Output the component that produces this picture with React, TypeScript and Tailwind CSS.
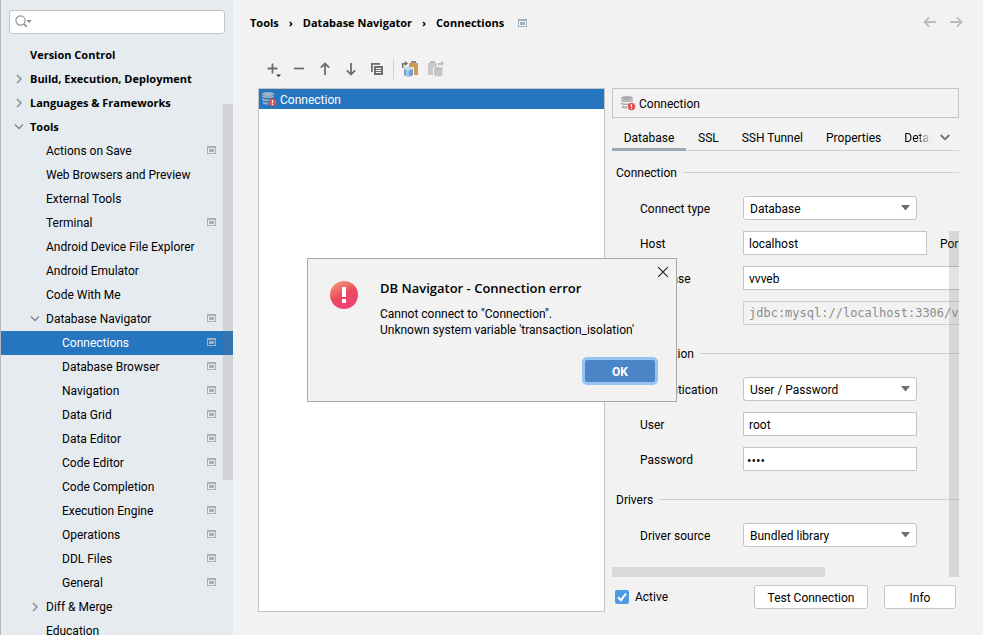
import { useState, type ReactNode } from "react";
import clsx from "clsx";

type TreeRow = {
  label: string;
  level: 0 | 1 | 2;
  arrow?: "open" | "closed";
  project?: boolean;
  selected?: boolean;
};

const TREE: TreeRow[] = [
  { label: "Version Control", level: 0 },
  { label: "Build, Execution, Deployment", level: 0, arrow: "closed" },
  { label: "Languages & Frameworks", level: 0, arrow: "closed" },
  { label: "Tools", level: 0, arrow: "open" },
  { label: "Actions on Save", level: 1, project: true },
  { label: "Web Browsers and Preview", level: 1 },
  { label: "External Tools", level: 1 },
  { label: "Terminal", level: 1, project: true },
  { label: "Android Device File Explorer", level: 1 },
  { label: "Android Emulator", level: 1 },
  { label: "Code With Me", level: 1 },
  { label: "Database Navigator", level: 1, arrow: "open", project: true },
  { label: "Connections", level: 2, project: true, selected: true },
  { label: "Database Browser", level: 2, project: true },
  { label: "Navigation", level: 2, project: true },
  { label: "Data Grid", level: 2, project: true },
  { label: "Data Editor", level: 2, project: true },
  { label: "Code Editor", level: 2, project: true },
  { label: "Code Completion", level: 2, project: true },
  { label: "Execution Engine", level: 2, project: true },
  { label: "Operations", level: 2, project: true },
  { label: "DDL Files", level: 2, project: true },
  { label: "General", level: 2, project: true },
  { label: "Diff & Merge", level: 1, arrow: "closed" },
  { label: "Education", level: 1 },
];

const BOLD = "font-['Open_Sans','Noto_Sans',sans-serif] text-[11px] font-bold";

function ProjectIcon({ className }: { className?: string }) {
  return (
    <svg viewBox="0 0 9 8" className={clsx("h-2 w-[9px] shrink-0", className)} aria-hidden="true">
      <path d="M0 0h9v8H0zM1 2v5h7V2z" fill="#a6b2bb" fillRule="evenodd" />
      <path d="M2 3h5v3H2z" fill="#a6b2bb" />
    </svg>
  );
}

function Arrow({ open }: { open: boolean }) {
  return (
    <svg viewBox="0 0 10 10" className="size-[10px]" fill="none" stroke="#808589" strokeWidth="1.3" aria-hidden="true">
      <path d={open ? "M1 2.500l4 4 4-4" : "M3 1l4 4-4 4"} />
    </svg>
  );
}

function DbErrorIcon({ light }: { light?: boolean }) {
  const fill = light ? "#9fb0c0" : "#a9adb1";
  return (
    <svg viewBox="0 0 16 16" className="size-4 shrink-0" aria-hidden="true">
      <g fill={fill}>
        <ellipse cx="7" cy="3" rx="6" ry="2" />
        <path d="M1 4.200c1.400 1.400 10.600 1.400 12 0v1.600c-1.200 1.700-10.800 1.700-12 0z" />
        <path d="M1 7.200c1.500 1.300 5 1.500 8 1.200l-1 1.700c-3 .1-6-.2-7-1.200z" />
        <path d="M2 10.500c1 .9 3 1.100 5 1.100v2c-2.600 0-4.600-.3-5-1.100z" />
      </g>
      <circle cx="11.500" cy="11.500" r="3.800" fill="#e05555" />
      <path d="M11 9h1v3.200h-1zM11 13h1v1h-1z" fill="#fff" />
    </svg>
  );
}

function ToolButton({ label, children }: { label: string; children: ReactNode }) {
  return (
    <button type="button" aria-label={label} className="flex h-[26px] w-[26px] items-center justify-center">
      <svg viewBox="0 0 16 16" className="size-4" fill="none" stroke="#6e6e6e" strokeWidth="1.800" aria-hidden="true">
        {children}
      </svg>
    </button>
  );
}

function Toolbar() {
  return (
    <div className="flex h-[26px] items-center pl-[2px]">
      <ToolButton label="Add connection">
        <path d="M7.500 2.500v10M2.500 7.500h10" />
        <path d="M11 13.500h5l-2.500 2.500z" fill="#333" stroke="none" />
      </ToolButton>
      <ToolButton label="Remove connection">
        <path d="M3 7.500h10" />
      </ToolButton>
      <ToolButton label="Move up">
        <path d="M8 14V2.500M3.800 6.700L8 2.500l4.200 4.200" />
      </ToolButton>
      <ToolButton label="Move down">
        <path d="M8 2v11.500M3.800 9.300L8 13.500l4.200-4.200" />
      </ToolButton>
      <ToolButton label="Duplicate connection">
        <path d="M2.900 11V2.900H11" />
        <path d="M5 5h9v9H5zM7 7v1h5V7zM7 9v1h5V9zM7 11v1h5v-1z" fill="#6e6e6e" stroke="none" fillRule="evenodd" />
      </ToolButton>
      <div className="mx-[3px] h-5 w-px bg-[#d0d0d0]" />
      <ToolButton label="Paste connections">
        <g stroke="none">
          <path d="M7 2h9v12h-4V6H7z" fill="#cf9b4e" />
          <path d="M9 0h5v2H9z" fill="#8a8d90" />
          <path d="M0 7V2h3V0l3 2.500L3 5V3.500H1.500V7z" fill="#6e6e6e" />
          <path d="M2 7.500v6c0 2.600 9 2.600 9 0v-6z" fill="#6f9fd0" />
          <path d="M4 8v7c1 .3 2 .4 3 .4V8z" fill="#a5c8ea" />
          <ellipse cx="6.500" cy="7.500" rx="4.500" ry="1.700" fill="#c3daf0" />
        </g>
      </ToolButton>
      <ToolButton label="Copy connections">
        <g stroke="none">
          <path d="M0 2h9v4H5v8H0z" fill="#c9c9c9" />
          <path d="M2 0h5v2H2z" fill="#b9b9b9" />
          <path d="M10 4.500V2h3V0l3 2.500L13 5V3.500h-1.500v1z" fill="#b9b9b9" />
          <path d="M6 8v5.500c0 2.600 8.500 2.600 8.500 0V8z" fill="#c6c6c6" />
          <ellipse cx="10.250" cy="7.500" rx="4.250" ry="1.500" fill="#bdbdbd" />
        </g>
      </ToolButton>
    </div>
  );
}

function Sidebar() {
  return (
    <aside className="relative w-[233px] shrink-0 overflow-hidden border-l border-[#b4b8bb] bg-[#e6ebf0]">
      <div className="px-2 pt-[10px] pb-[9px]">
        <label className="flex h-6 items-center rounded-[3px] border border-[#c4c4c4] bg-white pl-[5px]">
          <svg viewBox="0 0 17 14" className="h-[14px] w-[17px] shrink-0" fill="none" stroke="#8f979d" strokeWidth="1.200" aria-hidden="true">
            <circle cx="5.500" cy="5.500" r="4.600" />
            <path d="M8.800 8.800l3 3" strokeWidth="1.800" />
            <path d="M11.500 5h5L14 8z" fill="#7f868b" stroke="none" />
          </svg>
          <input type="text" aria-label="Search settings" className="min-w-0 flex-1 bg-transparent outline-none" />
        </label>
      </div>
      <ul>
        {TREE.map((row) => (
          <li
            key={row.label}
            className={clsx(
              "flex h-6 items-center pr-[17px]",
              row.level === 0 && "pb-px pl-[13px]",
              row.level === 0 && BOLD,
              row.level === 1 && "pl-[29px]",
              row.level === 2 && "pl-[45px]",
              row.selected && "bg-[#2675bf] text-white",
            )}
          >
            <span className="w-4 shrink-0">{row.arrow && <Arrow open={row.arrow === "open"} />}</span>
            <span className="flex-1 whitespace-nowrap">{row.label}</span>
            {row.project && <ProjectIcon className="mb-[2px]" />}
          </li>
        ))}
      </ul>
      <div className="absolute top-[104px] right-0 h-[376px] w-[10px] bg-[#737373]/20" />
    </aside>
  );
}

function Section({ title, children }: { title: string; children: ReactNode }) {
  return (
    <fieldset className="pb-[18px]">
      <legend className="flex h-5 w-full items-center gap-[6px] pl-1">
        <span className="pt-[2px]">{title}</span>
        <span className="h-px flex-1 bg-[#d0d0d0]" />
      </legend>
      <div className="flex flex-col gap-[11px] pt-[14px] pl-7">{children}</div>
    </fieldset>
  );
}

function Row({ label, id, children }: { label: string; id: string; children: ReactNode }) {
  return (
    <div className="flex h-6 items-center">
      <label htmlFor={id} className="w-[103px] shrink-0 pt-[2px]">
        {label}
      </label>
      {children}
    </div>
  );
}

function Dropdown({ id, value }: { id: string; value: string }) {
  return (
    <div className="relative h-6 w-[174px] shrink-0">
      <select id={id} className="h-6 w-full appearance-none rounded-[3px] border border-[#c4c4c4] bg-white pt-[2px] pl-[6px]">
        <option>{value}</option>
      </select>
      <svg viewBox="0 0 9 6" className="pointer-events-none absolute top-[9px] right-[7px] h-[6px] w-[9px]" aria-hidden="true">
        <path d="M0 0h9L4.500 5.500z" fill="#6e6e6e" />
      </svg>
    </div>
  );
}

const FIELD = "h-6 shrink-0 border border-[#c4c4c4] bg-white px-[5px] pt-[2px] outline-none";

function ConnectionForm() {
  return (
    <div className="relative min-h-0 flex-1 overflow-hidden pt-[11px]">
      <Section title="Connection">
        <Row label="Connect type" id="connect-type">
          <Dropdown id="connect-type" value="Database" />
        </Row>
        <Row label="Host" id="host">
          <input id="host" defaultValue="localhost" className={clsx(FIELD, "w-[184px]")} />
          <label htmlFor="port" className="ml-[13px] pt-[2px] whitespace-nowrap">
            Port
          </label>
          <input id="port" defaultValue="3306" className={clsx(FIELD, "ml-4 w-16")} />
        </Row>
        <Row label="Database" id="database">
          <input id="database" defaultValue="vvveb" className={clsx(FIELD, "w-[300px]")} />
        </Row>
        <Row label="URL" id="url">
          <input
            id="url"
            disabled
            defaultValue="jdbc:mysql://localhost:3306/vvveb"
            className="h-6 w-[300px] shrink-0 border border-[#cfcfcf] px-[5px] font-['DejaVu_Sans_Mono',monospace] text-[#8c8c8c]"
          />
        </Row>
      </Section>
      <Section title="Authentication">
        <Row label="Authentication" id="auth">
          <Dropdown id="auth" value="User / Password" />
        </Row>
        <Row label="User" id="user">
          <input id="user" defaultValue="root" className={clsx(FIELD, "w-[174px]")} />
        </Row>
        <Row label="Password" id="password">
          <input id="password" type="password" defaultValue="root" className="h-6 w-[174px] border border-[#c4c4c4] bg-white px-[3px] pt-[2px] font-['Open_Sans',sans-serif] outline-none" />
        </Row>
      </Section>
      <Section title="Drivers">
        <Row label="Driver source" id="driver">
          <Dropdown id="driver" value="Bundled library" />
        </Row>
      </Section>
      <div className="absolute top-20 right-0 bottom-0 w-[10px] bg-[#737373]/20" />
      <div className="absolute bottom-0 left-0 h-[10px] w-[213px] bg-[#d9d9d9]" />
    </div>
  );
}

function Tabs() {
  return (
    <div className="flex h-[33px] items-stretch border-b border-[#d0d0d0] whitespace-nowrap" role="tablist">
      <button type="button" role="tab" aria-selected="true" className="-mb-px w-[74px] shrink-0 border-b-[3px] border-[#9ca7b8] pt-[9px]">
        Database
      </button>
      <button type="button" role="tab" className="pt-[7px] pl-3">
        SSL
      </button>
      <button type="button" role="tab" className="pt-[7px] pl-[23px]">
        SSH Tunnel
      </button>
      <button type="button" role="tab" className="pt-[7px] pl-[23px]">
        Properties
      </button>
      <button type="button" role="tab" className="ml-[23px] w-[27px] overflow-hidden mask-r-from-50% pt-[7px] text-left">
        Details
      </button>
      <button type="button" aria-label="More tabs" className="ml-auto pt-[7px] pr-[9px]">
        <svg viewBox="0 0 10 7" className="h-[7px] w-[10px]" fill="none" stroke="#6e6e6e" strokeWidth="1.800" aria-hidden="true">
          <path d="M.7 1l4.300 4.300L9.300 1" />
        </svg>
      </button>
    </div>
  );
}

function ErrorDialog({ onClose }: { onClose: () => void }) {
  return (
    <div className="absolute inset-x-0 top-[258px] flex justify-center pl-px">
      <div role="alertdialog" aria-labelledby="dialog-title" className="relative flex h-36 w-[370px] border border-[#a8a8a8] bg-[#f2f2f2] pt-[21px] pr-[18px] pl-[22px]">
        <svg viewBox="0 0 28 28" className="mt-px size-7 shrink-0" aria-hidden="true">
          <defs>
            <linearGradient id="alert" x1="0.200" y1="0" x2="0.700" y2="1">
              <stop offset="0" stopColor="#f59a7c" />
              <stop offset="0.500" stopColor="#ea4a5f" />
              <stop offset="1" stopColor="#ee3f7c" />
            </linearGradient>
          </defs>
          <circle cx="14" cy="14" r="14" fill="url(#alert)" />
          <path d="M12 6h4v10h-4zM12 18h4v4h-4z" fill="#fff" />
        </svg>
        <div className="ml-[22px] flex flex-1 flex-col">
          <h2 id="dialog-title" className="font-['Open_Sans','Noto_Sans',sans-serif] text-[13px] leading-4 font-semibold">
            DB Navigator - Connection error
          </h2>
          <p className="mt-[10px] leading-4 whitespace-nowrap">
            Cannot connect to "Connection".
            <br />
            Unknown system variable 'transaction_isolation'
          </p>
          <button
            type="button"
            onClick={onClose}
            className="mt-[19px] h-7 w-[76px] self-end rounded-[5px] border-[3px] border-[#97c3f3] bg-[#4a86c7] pt-px font-bold text-white"
          >
            OK
          </button>
        </div>
        <button type="button" aria-label="Close" onClick={onClose} className="absolute top-2 right-2">
          <svg viewBox="0 0 10 10" className="size-[10px]" stroke="#222" strokeWidth="1.200" aria-hidden="true">
            <path d="M0 0l10 10M10 0L0 10" />
          </svg>
        </button>
      </div>
    </div>
  );
}

export default function App() {
  const [error, setError] = useState(true);
  return (
    <div className="relative flex h-screen overflow-hidden bg-[#f2f2f2] font-[Roboto,'Open_Sans',sans-serif] text-[12px] leading-4 text-black">
      <Sidebar />
      <main className="flex min-w-0 flex-1 flex-col pr-6 pb-[23px] pl-[25px]">
        <header className="-ml-2 flex h-[46px] items-center">
          <nav aria-label="Breadcrumb" className={clsx("flex items-center whitespace-nowrap", BOLD)}>
            <span>Tools</span>
            <span className="w-6 text-center">›</span>
            <span>Database Navigator</span>
            <span className="w-6 text-center">›</span>
            <span>Connections</span>
            <ProjectIcon className="ml-[14px]" />
          </nav>
          <div className="-mr-1 ml-auto flex gap-[14px]">
            {["Back", "Forward"].map((name) => (
              <button key={name} type="button" aria-label={name} className="pb-[2px]">
                <svg viewBox="0 0 13 12" className="h-3 w-[13px]" fill="none" stroke="#bcbcbc" strokeWidth="1.800" aria-hidden="true">
                  <path d={name === "Back" ? "M13 6H1.500M6 1.500L1.500 6 6 10.500" : "M0 6h11.500M7 1.500L11.500 6 7 10.500"} />
                </svg>
              </button>
            ))}
          </div>
        </header>
        <div className="pt-[10px] pb-[6px]">
          <Toolbar />
        </div>
        <div className="grid min-h-0 flex-1 grid-cols-2 gap-[7px]">
          <ul className="border border-[#c4c4c4] bg-white">
            <li className="flex h-5 items-center gap-[3px] bg-[#2675bf] pl-[2px] text-white">
              <DbErrorIcon light />
              <span className="pt-[2px]">Connection</span>
            </li>
          </ul>
          <section className="flex min-h-0 min-w-0 flex-col">
            <div className="flex h-[30px] shrink-0 items-center gap-[3px] border border-[#c4c4c4] pl-[7px]">
              <DbErrorIcon />
              <span className="pt-[2px]">Connection</span>
            </div>
            <Tabs />
            <ConnectionForm />
            <div className="flex items-center pt-2 pr-[3px] pb-[3px] pl-[3px]">
              <label className="flex items-center gap-[6px]">
                <span className="relative size-[14px]">
                  <input type="checkbox" defaultChecked className="block size-[14px] appearance-none rounded-[2px] bg-[#c4c4c4] checked:bg-[#4d9be3]" />
                  <svg viewBox="0 0 14 14" className="pointer-events-none absolute inset-0 size-[14px]" fill="none" stroke="#fff" strokeWidth="2" aria-hidden="true">
                    <path d="M3 7.200l3 3L11 3.500" />
                  </svg>
                </span>
                Active
              </label>
              <button type="button" className="ml-auto h-6 w-[114px] rounded-[3px] border border-[#c4c4c4] bg-white pt-px">
                Test Connection
              </button>
              <button type="button" className="ml-4 h-6 w-[72px] rounded-[3px] border border-[#c4c4c4] bg-white pt-px">
                Info
              </button>
            </div>
          </section>
        </div>
      </main>
      {error && <ErrorDialog onClose={() => setError(false)} />}
    </div>
  );
}
